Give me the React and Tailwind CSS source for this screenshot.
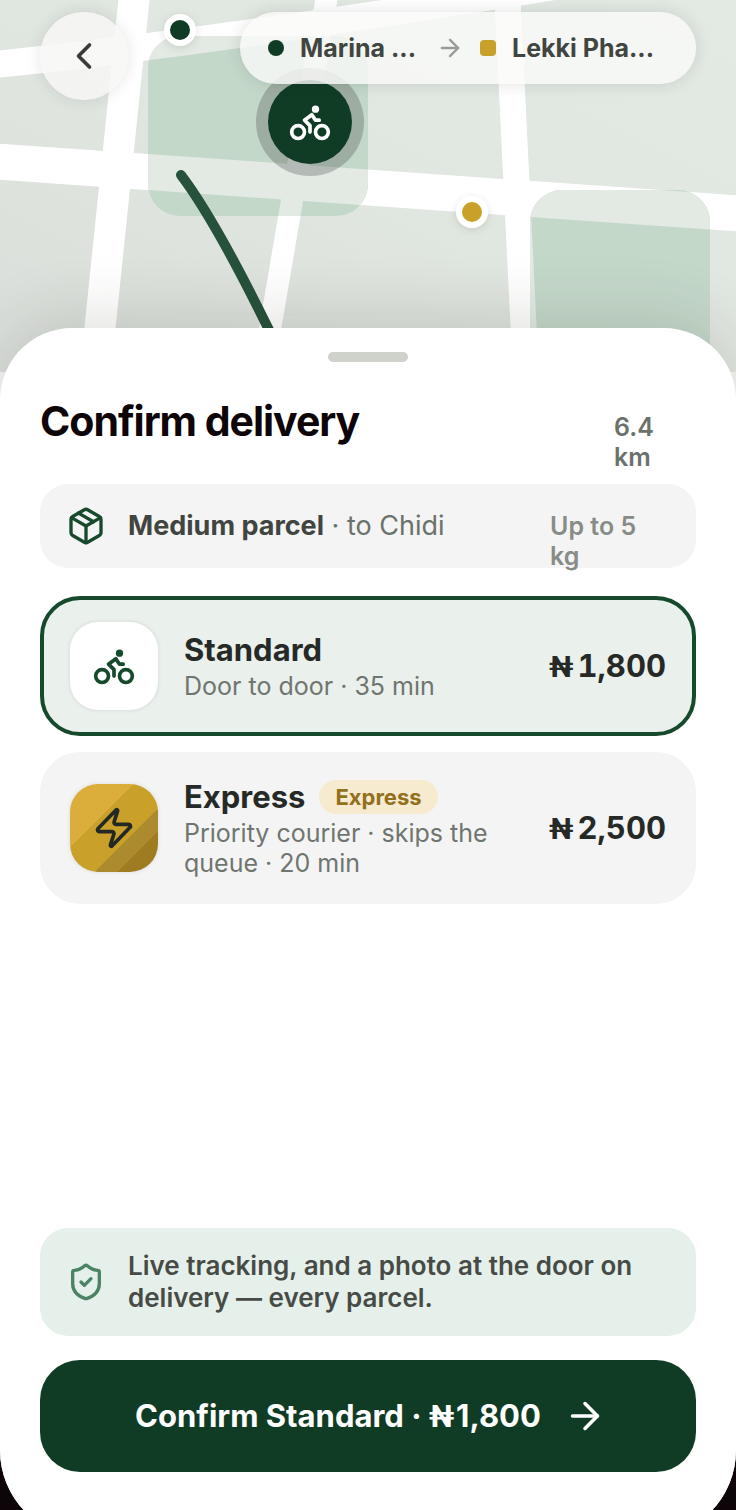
import React, { useState } from 'react';
import { ArrowRight, Bike, ChevronLeft, Package, ShieldCheck, Zap } from 'lucide-react';

const services = [
  {
    id: 'standard',
    name: 'Standard',
    description: 'Door to door · 35 min',
    price: '1,800',
    icon: Bike,
    tile: 'bg-white text-[#174a2c]',
  },
  {
    id: 'express',
    name: 'Express',
    badge: 'Express',
    description: 'Priority courier · skips the queue · 20 min',
    price: '2,500',
    icon: Zap,
    tile: 'bg-[linear-gradient(135deg,#dbae3b_36%,#c9a029_36%,#c9a029_64%,#ab8b2d_64%,#ab8b2d_77%,#9f7c22_77%)] text-[#232825]',
  },
];

const Roads = () => (
  <g fill="none" stroke="currentColor">
    <path d="M-10 65 Q 200 44 570 -16" strokeWidth="27" />
    <path d="M-10 161 L 746 214" strokeWidth="36" />
    <path d="M135 -10 L 95 376" strokeWidth="31" />
    <path d="M328 -10 L 262 376" strokeWidth="22" />
    <path d="M507 -10 L 526 376" strokeWidth="26" />
  </g>
);

const CityMap = () => (
  <svg
    viewBox="0 0 736 372"
    preserveAspectRatio="xMidYMin slice"
    className="absolute inset-0 w-full h-full"
    aria-hidden="true"
  >
    <defs>
      <linearGradient id="land" x1="0" y1="1" x2="1" y2="0">
        <stop offset="0" stopColor="#dadeda" />
        <stop offset="0.5" stopColor="#e0e6e0" />
        <stop offset="1" stopColor="#e3eae4" />
      </linearGradient>
      <clipPath id="parks">
        <rect x="148" y="36" width="220" height="180" rx="32" />
        <rect x="530" y="190" width="180" height="220" rx="32" />
      </clipPath>
      <filter id="pinShadow" x="-50%" y="-50%" width="200%" height="200%">
        <feDropShadow dx="0" dy="2" stdDeviation="4" floodColor="#1e2820" floodOpacity="0.12" />
      </filter>
    </defs>

    <rect width="736" height="372" fill="url(#land)" />
    <g className="text-white">
      <Roads />
    </g>

    {/* roads look tinted where they run through a park */}
    <g clipPath="url(#parks)" className="text-[#e2eae3]">
      <rect width="736" height="372" fill="#c4d8ca" />
      <Roads />
    </g>

    <path
      d="M181 175 Q 215 220 268 328 L 290 372"
      fill="none"
      stroke="#26513a"
      strokeWidth="10"
      strokeLinecap="round"
    />

    <g filter="url(#pinShadow)">
      <circle cx="180" cy="30" r="16" fill="#fff" />
      <circle cx="472" cy="212" r="16" fill="#fff" />
    </g>
    <circle cx="180" cy="30" r="10" fill="#103c25" />
    <circle cx="472" cy="212" r="10" fill="#c9a029" />

    <circle cx="310" cy="122" r="54" fill="#3c3c3c" fillOpacity="0.28" />
    <circle cx="310" cy="122" r="42" fill="#103c25" />
    <Bike x="288" y="100" width="44" height="44" color="#fff" strokeWidth={2} />
  </svg>
);

const ServiceOption = ({ service, selected, onSelect }) => {
  const Icon = service.icon;

  return (
    <label
      className={`flex items-center gap-[26px] rounded-[40px] border-4 px-[26px] py-[22px] cursor-pointer ${
        selected ? 'border-[#174a2c] bg-[#eaf0ec]' : 'border-[#f4f4f4] bg-[#f4f4f4]'
      }`}
    >
      <input
        type="radio"
        name="service"
        value={service.id}
        checked={selected}
        onChange={() => onSelect(service.id)}
        className="sr-only"
      />
      <span className={`flex size-[88px] shrink-0 items-center justify-center rounded-[28px] shadow-[0_0_4px_rgba(30,50,40,0.12)] ${service.tile}`}>
        <Icon size={44} strokeWidth={2} />
      </span>
      <span className="flex min-w-0 flex-1 flex-col gap-0.5">
        <span className="flex items-center gap-3.5 text-[31px] leading-[38px] font-bold text-[#262a27]">
          {service.name}
          {service.badge && (
            <span className="rounded-full bg-[#f7ebcf] px-4 text-[22px] leading-[34px] font-bold text-[#92701c]">
              {service.badge}
            </span>
          )}
        </span>
        <span className="text-[25px] leading-[30px] text-[#6f756f]">{service.description}</span>
      </span>
      <span className="flex shrink-0 items-baseline gap-1 text-[31px] leading-[38px] font-bold text-[#262a27] tabular-nums">
        <span className="font-['Roboto',sans-serif] text-[30px]">₦</span>
        {service.price}
      </span>
    </label>
  );
};

const App = () => {
  const [selectedId, setSelectedId] = useState('standard');
  const selected = services.find((s) => s.id === selectedId);

  return (
    <div className="h-screen overflow-hidden bg-[#0d0507] font-['Inter',sans-serif]">
      <div className="flex min-h-[calc(100vh+28px)] flex-col overflow-hidden rounded-b-[88px] bg-[#f5f5f5]">
        <header className="relative h-[372px] shrink-0 overflow-hidden">
          <CityMap />
          <div className="relative flex items-start justify-between px-10 pt-3">
            <button
              type="button"
              aria-label="Back"
              className="flex size-[88px] items-center justify-center rounded-full bg-[#f7f7f6]/85 text-[#3a3c39] shadow-[0_0_16px_rgba(30,40,30,0.12)]"
            >
              <ChevronLeft size={44} strokeWidth={2} />
            </button>
            <div className="flex h-[72px] w-[456px] items-center gap-4 rounded-full bg-[#fafaf9]/80 px-7 text-[25px] leading-8 font-bold text-[#41453f] shadow-[0_0_16px_rgba(30,40,30,0.14)]">
              <span className="size-4 shrink-0 rounded-full bg-[#103c25]" />
              <span className="flex-1 whitespace-nowrap">Marina ...</span>
              <ArrowRight size={28} strokeWidth={2} className="shrink-0 text-[#989c96]" />
              <span className="size-4 shrink-0 rounded-sm bg-[#c9a029]" />
              <span className="w-[156px] whitespace-nowrap">Lekki Pha...</span>
            </div>
          </div>
        </header>

        <main className="relative -mt-11 flex flex-1 flex-col rounded-t-[72px] bg-white px-10 pt-6 pb-[66px] shadow-[0_-12px_64px_rgba(40,40,30,0.14)]">
          <div className="h-2.5 w-20 self-center rounded-full bg-[#cfd1cb]" />

          <div className="mt-8 flex justify-between">
            <h1 className="text-[41px] leading-[54px] font-bold tracking-tight text-[#0d0507]">Confirm delivery</h1>
            <p className="mt-[18px] w-[82px] pr-4 text-[25px] leading-[30px] font-semibold text-[#6b716b]">6.4 km</p>
          </div>

          <div className="mt-3 flex h-[84px] items-center gap-[22px] rounded-[28px] bg-[#f4f4f4] px-[26px]">
            <Package size={40} strokeWidth={2} className="shrink-0 text-[#174a2c]" />
            <p className="flex-1 text-[27px] leading-8 text-[#6b716b]">
              <span className="font-bold text-[#41453f]">Medium parcel</span> · to Chidi
            </p>
            <p className="h-[30px] w-[120px] pr-4 text-[25px] leading-[30px] font-semibold text-[#878c87]">Up to 5 kg</p>
          </div>

          <div className="mt-7 flex flex-col gap-4" role="radiogroup" aria-label="Delivery service">
            {services.map((service) => (
              <ServiceOption
                key={service.id}
                service={service}
                selected={service.id === selectedId}
                onSelect={setSelectedId}
              />
            ))}
          </div>

          <div className="mt-auto flex items-center gap-[22px] rounded-[28px] bg-[#e4f0e9] px-[26px] py-[22px]">
            <ShieldCheck size={40} strokeWidth={2} className="shrink-0 text-[#4b8364]" />
            <p className="flex-1 text-[26px] leading-8 font-semibold text-[#474b46]">
              Live tracking, and a photo at the door on delivery — every parcel.
            </p>
          </div>

          <button
            type="button"
            className="mt-6 flex h-28 items-center justify-center gap-7 rounded-[40px] bg-[#103c25] text-[31px] leading-10 font-bold text-white"
          >
            <span>
              Confirm {selected.name} · <span className="mr-0.5 font-['Roboto',sans-serif]">₦</span>
              {selected.price}
            </span>
            <ArrowRight size={32} viewBox="3 3 18 18" strokeWidth={2} />
          </button>
        </main>
      </div>
    </div>
  );
};

export default App;
